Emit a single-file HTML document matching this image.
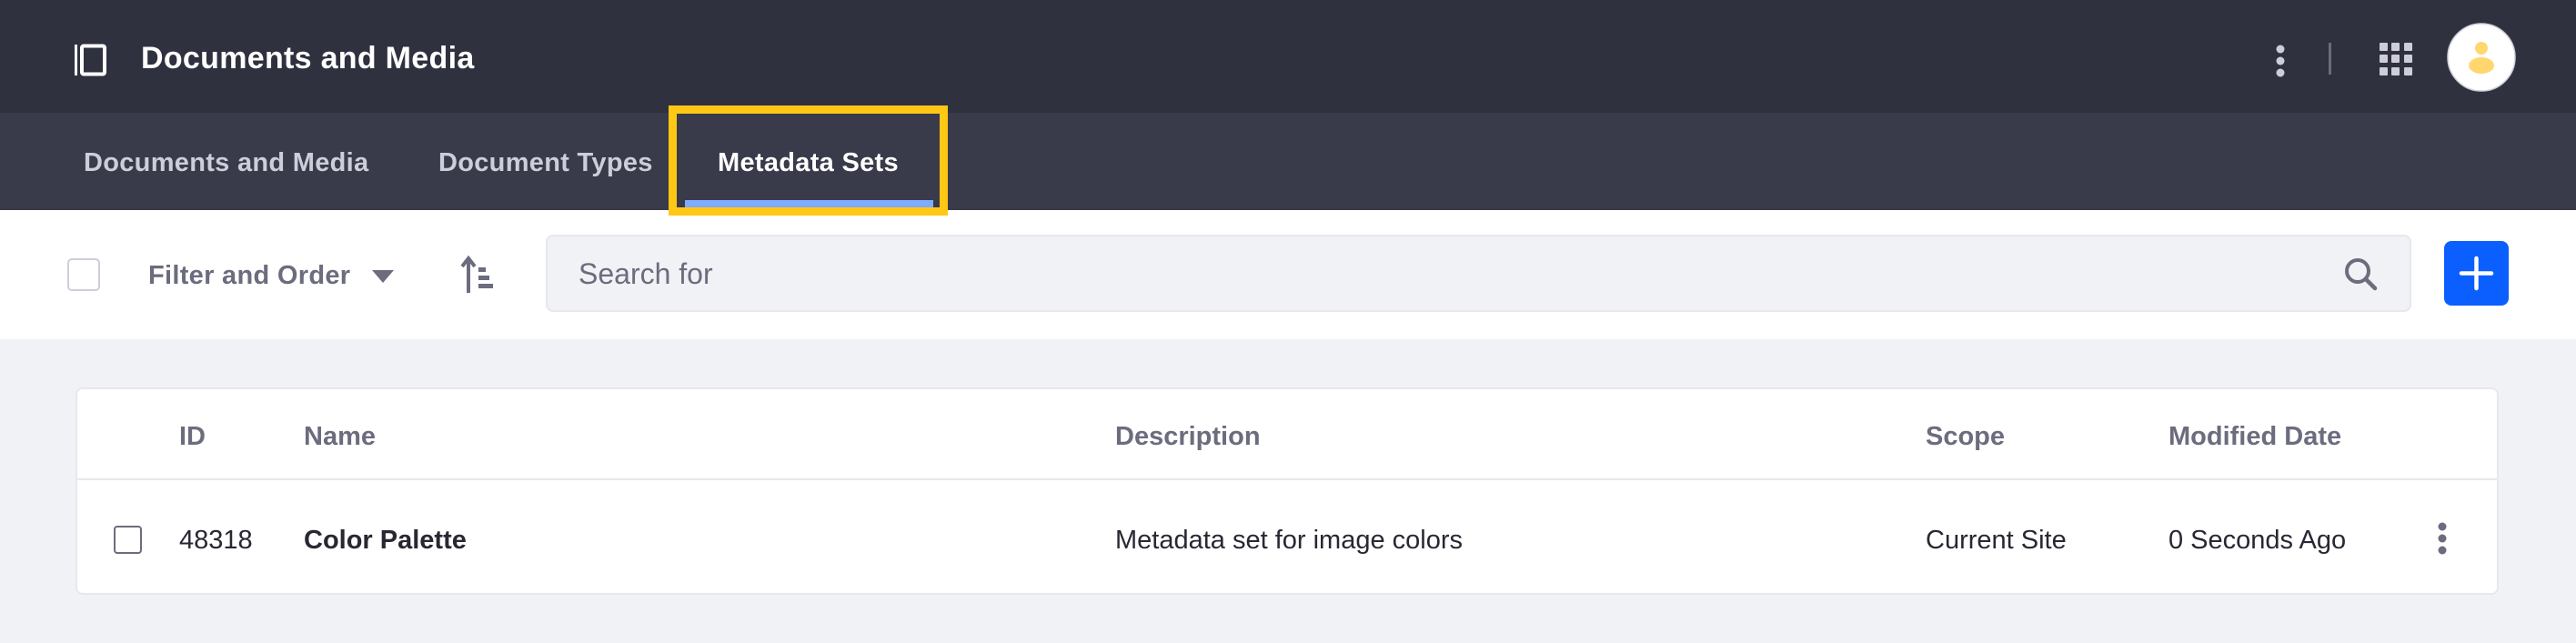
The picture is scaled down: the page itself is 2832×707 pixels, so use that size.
<!DOCTYPE html>
<html><head><meta charset="utf-8"><style>
*{margin:0;padding:0;box-sizing:border-box}
body{width:2832px;height:707px;background:#f1f2f5;font-family:"Liberation Sans",sans-serif;position:relative;overflow:hidden}
.a{position:absolute}
.t{position:absolute;white-space:nowrap;line-height:1}
</style></head><body>
<div class="a" style="left:0;top:0;width:2832px;height:124px;background:#30313f"></div>
<div class="a" style="left:0;top:124px;width:2832px;height:107px;background:#393a4a"></div>
<div class="a" style="left:0;top:231px;width:2832px;height:142px;background:#fff"></div>
<svg class="a" style="left:80px;top:47px" width="38" height="38" viewBox="0 0 38 38"><rect x="2" y="2" width="3" height="34" fill="#fff"/><rect x="10" y="3.5" width="25" height="31" rx="2" fill="none" stroke="#fff" stroke-width="4"/></svg>
<div class="t" style="left:155px;top:47px;font-size:34px;font-weight:bold;color:#fff;letter-spacing:0.3px">Documents and Media</div>
<svg class="a" style="left:2496px;top:48px" width="22" height="40"><circle cx="11" cy="6" r="4.5" fill="#cdced9"/><circle cx="11" cy="19" r="4.5" fill="#cdced9"/><circle cx="11" cy="32" r="4.5" fill="#cdced9"/></svg>
<div class="a" style="left:2560px;top:47px;width:3px;height:35px;background:#6b6c7e"></div>
<svg class="a" style="left:2616px;top:47px" width="37" height="37"><g fill="#cdced9"><rect x="0" y="0" width="9" height="9" rx="1"/><rect x="13" y="0" width="9" height="9" rx="1"/><rect x="27" y="0" width="9" height="9" rx="1"/><rect x="0" y="13" width="9" height="9" rx="1"/><rect x="13" y="13" width="9" height="9" rx="1"/><rect x="27" y="13" width="9" height="9" rx="1"/><rect x="0" y="27" width="9" height="9" rx="1"/><rect x="13" y="27" width="9" height="9" rx="1"/><rect x="27" y="27" width="9" height="9" rx="1"/></g></svg>
<svg class="a" style="left:2690px;top:25px" width="76" height="76"><circle cx="38" cy="38" r="37" fill="#fff" stroke="#cdced9" stroke-width="1.5"/><circle cx="38" cy="28" r="7" fill="#ffd76e"/><ellipse cx="38" cy="47" rx="14" ry="9" fill="#ffd76e"/></svg>
<div class="t" style="left:92px;top:165px;font-size:29px;font-weight:bold;color:#cdced9;letter-spacing:0.3px">Documents and Media</div>
<div class="t" style="left:482px;top:165px;font-size:29px;font-weight:bold;color:#cdced9;letter-spacing:0.3px">Document Types</div>
<div class="t" style="left:789px;top:165px;font-size:29px;font-weight:bold;color:#fff;letter-spacing:0.3px">Metadata Sets</div>
<div class="a" style="left:753px;top:220px;width:273px;height:11px;background:#80acff"></div>
<div class="a" style="left:735px;top:116px;width:307px;height:121px;border:9px solid #ffc814"></div>
<div class="a" style="left:74px;top:284px;width:36px;height:36px;border:2px solid #cdced9;border-radius:5px;background:#fff"></div>
<div class="t" style="left:163px;top:289px;font-size:29px;font-weight:bold;color:#6b6c7e;letter-spacing:0.3px">Filter and Order</div>
<svg class="a" style="left:408px;top:296px" width="26" height="16"><path d="M1 1H25L13 15Z" fill="#6b6c7e"/></svg>
<svg class="a" style="left:506px;top:280px" width="40" height="44"><path d="M9 42V6M2 13L9 4L16 13" stroke="#6b6c7e" stroke-width="4" fill="none"/><rect x="20" y="14" width="8" height="5" fill="#6b6c7e"/><rect x="20" y="23" width="12" height="5" fill="#6b6c7e"/><rect x="20" y="32" width="16" height="5" fill="#6b6c7e"/></svg>
<div class="a" style="left:600px;top:258px;width:2051px;height:85px;background:#f1f2f5;border:2px solid #e7e7ed;border-radius:8px"></div>
<div class="t" style="left:636px;top:285px;font-size:32px;color:#6b6c7e">Search for</div>
<svg class="a" style="left:2576px;top:282px" width="40" height="40"><circle cx="16" cy="16" r="12" fill="none" stroke="#6b6c7e" stroke-width="4"/><path d="M25 25L35 35" stroke="#6b6c7e" stroke-width="4.5" stroke-linecap="round"/></svg>
<div class="a" style="left:2687px;top:265px;width:71px;height:71px;background:#0b5fff;border-radius:8px"></div>
<svg class="a" style="left:2687px;top:265px" width="71" height="71"><path d="M35.5 19V52M19 35.5H52" stroke="#fff" stroke-width="4.5" stroke-linecap="round"/></svg>
<div class="a" style="left:83px;top:426px;width:2664px;height:228px;background:#fff;border:2px solid #e7e7ed;border-radius:8px"></div>
<div class="a" style="left:85px;top:526px;width:2660px;height:2px;background:#e7e7ed"></div>
<div class="t" style="left:197px;top:466px;font-size:29px;font-weight:bold;color:#6b6c7e">ID</div>
<div class="t" style="left:334px;top:466px;font-size:29px;font-weight:bold;color:#6b6c7e">Name</div>
<div class="t" style="left:1226px;top:466px;font-size:29px;font-weight:bold;color:#6b6c7e">Description</div>
<div class="t" style="left:2117px;top:466px;font-size:29px;font-weight:bold;color:#6b6c7e">Scope</div>
<div class="t" style="left:2384px;top:466px;font-size:29px;font-weight:bold;color:#6b6c7e">Modified Date</div>
<div class="a" style="left:125px;top:578px;width:31px;height:31px;border:2.5px solid #6b6c7e;border-radius:4px"></div>
<div class="t" style="left:197px;top:580px;font-size:29px;color:#272833">48318</div>
<div class="t" style="left:334px;top:580px;font-size:29px;font-weight:bold;color:#272833">Color Palette</div>
<div class="t" style="left:1226px;top:580px;font-size:29px;color:#272833">Metadata set for image colors</div>
<div class="t" style="left:2117px;top:580px;font-size:29px;color:#272833">Current Site</div>
<div class="t" style="left:2384px;top:580px;font-size:29px;color:#272833">0 Seconds Ago</div>
<svg class="a" style="left:2674px;top:573px" width="22" height="40"><circle cx="11" cy="6" r="4.5" fill="#6b6c7e"/><circle cx="11" cy="19" r="4.5" fill="#6b6c7e"/><circle cx="11" cy="32" r="4.5" fill="#6b6c7e"/></svg>
</body></html>
